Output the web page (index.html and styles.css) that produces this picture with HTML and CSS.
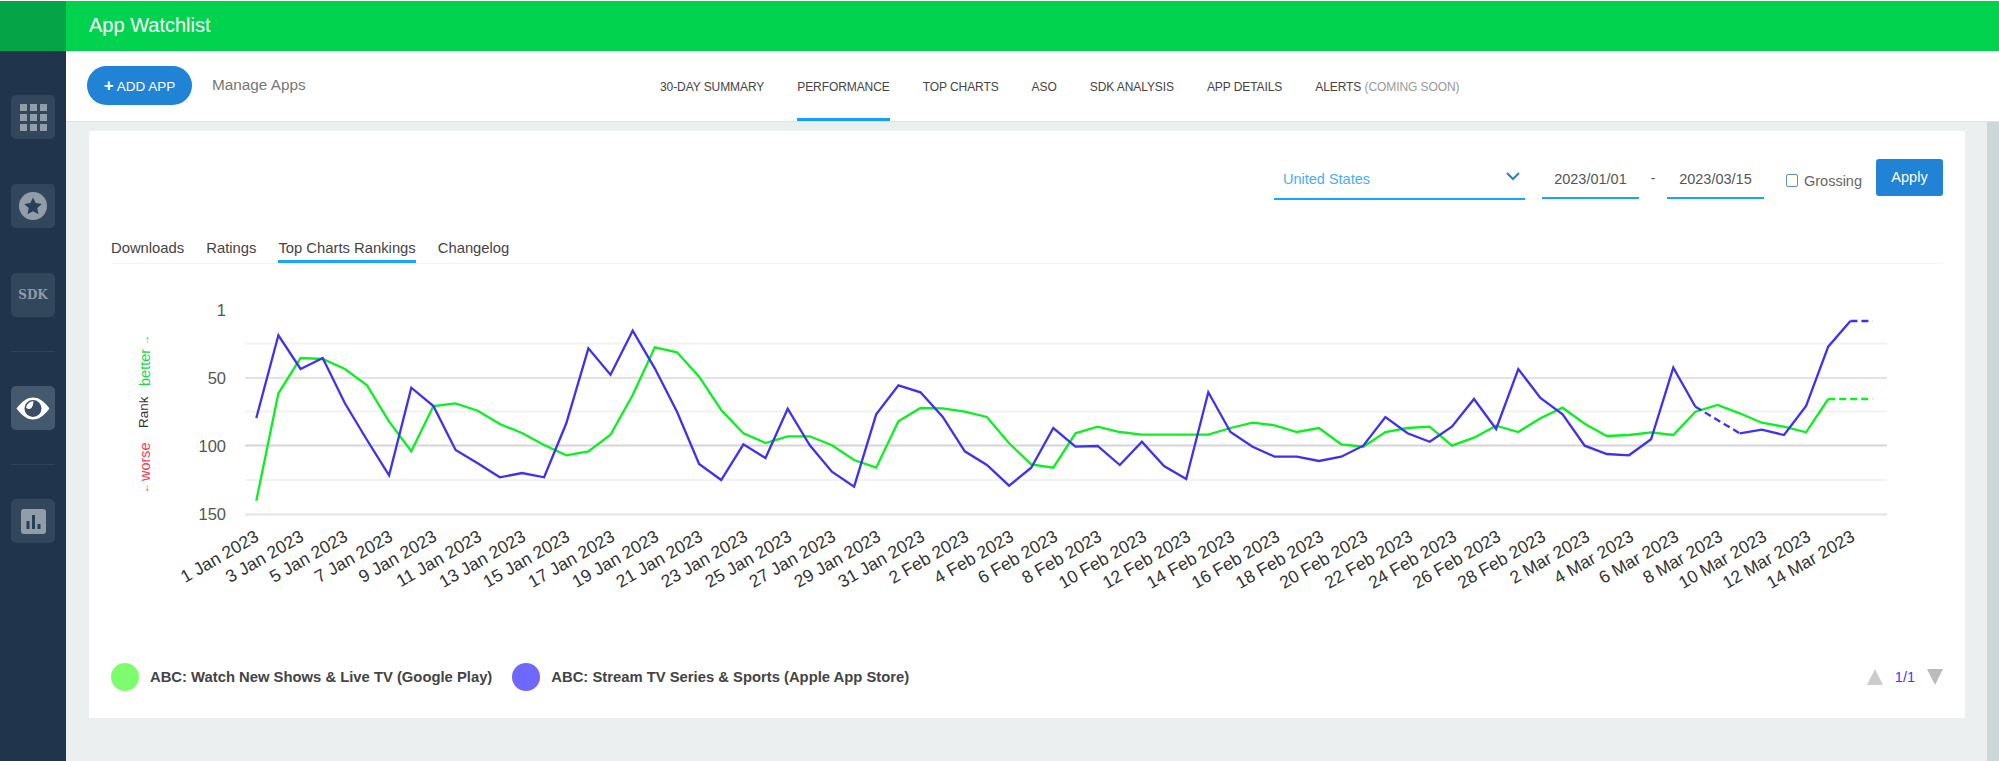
FILE: index.html
```html
<!DOCTYPE html>
<html lang="en">
<head>
<meta charset="utf-8">
<title>App Watchlist</title>
<link rel="stylesheet" href="styles.css">
</head>
<body>
<div class="shell">
  <aside class="sidebar">
    <div class="brand"></div>
    <nav class="side-nav">
      <a class="tile">
        <svg class="ico-grid" viewBox="0 0 27 27" width="27" height="27"><g class="ico-fill"><rect x="0" y="0" width="7" height="7"/><rect x="10" y="0" width="7" height="7"/><rect x="20" y="0" width="7" height="7"/><rect x="0" y="10" width="7" height="7"/><rect x="10" y="10" width="7" height="7"/><rect x="20" y="10" width="7" height="7"/><rect x="0" y="20" width="7" height="7"/><rect x="10" y="20" width="7" height="7"/><rect x="20" y="20" width="7" height="7"/></g></svg>
      </a>
      <a class="tile">
        <svg viewBox="0 0 28 28" width="28" height="28"><circle class="ico-fill" cx="14" cy="14" r="14"/><path class="ico-dark" d="M14 5.5l2.7 5.6 6.1.8-4.5 4.2 1.2 6.1-5.5-3-5.500 3 1.200-6.100-4.500-4.200 6.100-.8z"/></svg>
      </a>
      <a class="tile"><span class="sdk">SDK</span></a>
      <hr class="side-rule">
      <a class="tile tile-active">
        <svg viewBox="0 0 34 23" width="34" height="23"><path class="eye-band" d="M.5 11.500C6.500 3.500 12 .5 17 .5s10.500 3 16.500 11c-6 8-11.500 11-16.500 11S6.500 19.500.5 11.500z"/><circle class="eye-pupil" cx="17" cy="11.500" r="8.500"/><path class="eye-glint" d="M17.500 4.200c-3.600 0-6.800 2.600-7.400 6.200 1 1.600 3.400 2 5 .8 1.800-1.400 1.800-3.800 2.400-7z"/></svg>
      </a>
      <hr class="side-rule">
      <a class="tile">
        <svg viewBox="0 0 25 25" width="25" height="25"><rect class="ico-fill" width="25" height="25" rx="3"/><rect class="ico-dark" x="5.500" y="12" width="3" height="8"/><rect class="ico-dark" x="11" y="6" width="3" height="14"/><rect class="ico-dark" x="16.500" y="15" width="3" height="5"/></svg>
      </a>
    </nav>
  </aside>

  <main class="main">
    <header class="topbar">App Watchlist</header>

    <div class="subnav">
      <button class="add-btn"><span class="plus">+</span> ADD APP</button>
      <a class="manage">Manage Apps</a>
      <nav class="tabs">
        <a class="tab">30-DAY SUMMARY</a>
        <a class="tab tab-active">PERFORMANCE</a>
        <a class="tab">TOP CHARTS</a>
        <a class="tab">ASO</a>
        <a class="tab">SDK ANALYSIS</a>
        <a class="tab">APP DETAILS</a>
        <a class="tab">ALERTS <span class="soon">(COMING SOON)</span></a>
      </nav>
    </div>

    <div class="body-row">
      <section class="card">
        <div class="filters">
          <div class="select">
            <span>United States</span>
            <svg viewBox="0 0 14 9" width="14" height="9"><path class="chev" d="M1 1l6 6 6-6"/></svg>
          </div>
          <div class="date">2023/01/01</div>
          <div class="dash">-</div>
          <div class="date">2023/03/15</div>
          <label class="grossing"><span class="check"></span>Grossing</label>
          <button class="apply">Apply</button>
        </div>

        <div class="subtabs">
          <a class="subtab">Downloads</a>
          <a class="subtab">Ratings</a>
          <a class="subtab subtab-active">Top Charts Rankings</a>
          <a class="subtab">Changelog</a>
        </div>

        <svg class="chart" viewBox="111 264 1832 380" width="1832" height="380">
          <g class="grid">
            <line class="g-light" x1="245" x2="1887" y1="343.500" y2="343.500"/>
            <line class="g-mid" x1="245" x2="1887" y1="378" y2="378"/>
            <line class="g-light" x1="245" x2="1887" y1="411.500" y2="411.500"/>
            <line class="g-dark" x1="245" x2="1887" y1="445.500" y2="445.500"/>
            <line class="g-light" x1="245" x2="1887" y1="480" y2="480"/>
            <line class="g-mid" x1="245" x2="1887" y1="514.500" y2="514.500"/>
          </g>
          <g class="y-labels">
            <text x="226" y="316">1</text>
            <text x="226" y="384">50</text>
            <text x="226" y="452">100</text>
            <text x="226" y="520">150</text>
          </g>
          <text class="r-green" transform="translate(150 386) rotate(-90)">better</text>
          <text class="r-arrow r-green-fill" transform="translate(149 345) rotate(-90)">→</text>
          <text class="r-rank" transform="translate(148 428) rotate(-90)">Rank</text>
          <text class="r-red" transform="translate(150 481) rotate(-90)">worse</text>
          <text class="r-arrow r-red-fill" transform="translate(149 493) rotate(-90)">←</text>

          <polyline class="s-green" points="256.3,500.7 278.4,393.3 300.6,358 322.7,359 344.9,369 367,385.3 389.1,421.7 411.3,451.3 433.4,406 455.6,403.3 477.7,410.7 499.8,424 522,433 544.1,445 566.3,455.3 588.4,451.3 610.5,434.7 632.7,395 654.8,347.3 677,352.3 699.1,376.7 721.2,410 743.4,433.3 765.5,443 787.7,436.3 809.8,436.3 831.9,445.3 854.1,460 876.2,467.7 898.4,421.3 920.5,408 942.6,408.3 964.8,411.7 986.9,417 1009.1,443.3 1031.2,464.3 1053.3,467.7 1075.5,433.3 1097.6,426.7 1119.8,432 1141.9,434.7 1164,434.7 1186.2,434.7 1208.3,434.7 1230.5,428 1252.6,422.7 1274.7,425.3 1296.9,432 1319,428 1341.2,444.3 1363.3,446.7 1385.4,432 1407.6,428 1429.7,426.7 1451.9,445.7 1474,437.7 1496.1,425.7 1518.3,432 1540.4,418.3 1562.6,407.7 1584.7,423.7 1606.8,436 1629,435 1651.1,432.3 1673.3,435 1695.4,411.7 1717.5,405 1739.7,413.3 1761.8,422.7 1784,426.7 1806.1,432.3 1828.2,399"/>
          <polyline class="s-green s-dash" points="1828.2,399 1850.4,399 1872.5,399"/>
          <polyline class="s-blue" points="256.3,418 278.4,335.3 300.6,369 322.7,358 344.9,403.3 367,440 389.1,475.3 411.3,387.7 433.4,406 455.6,450 477.7,463.3 499.8,477.3 522,473 544.1,477.3 566.3,423.3 588.4,348.3 610.5,374.7 632.7,330.7 654.8,368.3 677,411.7 699.1,464 721.2,480 743.4,444.3 765.5,458 787.7,408.7 809.8,445.3 831.9,471.7 854.1,486.7 876.2,414.3 898.4,385.3 920.5,392.3 942.6,416.7 964.8,451.3 986.9,465 1009.1,485.7 1031.2,467.7 1053.3,428 1075.5,446.7 1097.6,446 1119.8,465 1141.9,441.7 1164,466 1186.2,479 1208.3,392.3 1230.5,432 1252.6,446.7 1274.7,456.7 1296.9,456.7 1319,461 1341.2,456.7 1363.3,445.7 1385.4,417 1407.6,433.3 1429.7,441.7 1451.9,426.7 1474,399 1496.1,429 1518.3,369 1540.4,398 1562.6,414.3 1584.7,445.7 1606.8,454 1629,455.3 1651.1,439.3 1673.3,367.7 1695.4,406.7"/>
          <polyline class="s-blue s-dash" points="1695.4,406.7 1717.5,420 1739.7,433.3"/>
          <polyline class="s-blue" points="1739.7,433.3 1761.8,429.7 1784,435 1806.1,406 1828.2,346.7 1850.4,321"/>
          <polyline class="s-blue s-dash" points="1850.4,321 1872.5,321"/>

          <g class="x-labels">
            <text transform="translate(260 540) rotate(-30)">1 Jan 2023</text>
            <text transform="translate(305 540) rotate(-30)">3 Jan 2023</text>
            <text transform="translate(349 540) rotate(-30)">5 Jan 2023</text>
            <text transform="translate(394 540) rotate(-30)">7 Jan 2023</text>
            <text transform="translate(438 540) rotate(-30)">9 Jan 2023</text>
            <text transform="translate(483 540) rotate(-30)">11 Jan 2023</text>
            <text transform="translate(527 540) rotate(-30)">13 Jan 2023</text>
            <text transform="translate(571 540) rotate(-30)">15 Jan 2023</text>
            <text transform="translate(616 540) rotate(-30)">17 Jan 2023</text>
            <text transform="translate(660 540) rotate(-30)">19 Jan 2023</text>
            <text transform="translate(704 540) rotate(-30)">21 Jan 2023</text>
            <text transform="translate(749 540) rotate(-30)">23 Jan 2023</text>
            <text transform="translate(793 540) rotate(-30)">25 Jan 2023</text>
            <text transform="translate(837 540) rotate(-30)">27 Jan 2023</text>
            <text transform="translate(882 540) rotate(-30)">29 Jan 2023</text>
            <text transform="translate(926 540) rotate(-30)">31 Jan 2023</text>
            <text transform="translate(970 540) rotate(-30)">2 Feb 2023</text>
            <text transform="translate(1015 540) rotate(-30)">4 Feb 2023</text>
            <text transform="translate(1059 540) rotate(-30)">6 Feb 2023</text>
            <text transform="translate(1103 540) rotate(-30)">8 Feb 2023</text>
            <text transform="translate(1148 540) rotate(-30)">10 Feb 2023</text>
            <text transform="translate(1192 540) rotate(-30)">12 Feb 2023</text>
            <text transform="translate(1236 540) rotate(-30)">14 Feb 2023</text>
            <text transform="translate(1281 540) rotate(-30)">16 Feb 2023</text>
            <text transform="translate(1325 540) rotate(-30)">18 Feb 2023</text>
            <text transform="translate(1369 540) rotate(-30)">20 Feb 2023</text>
            <text transform="translate(1414 540) rotate(-30)">22 Feb 2023</text>
            <text transform="translate(1458 540) rotate(-30)">24 Feb 2023</text>
            <text transform="translate(1502 540) rotate(-30)">26 Feb 2023</text>
            <text transform="translate(1547 540) rotate(-30)">28 Feb 2023</text>
            <text transform="translate(1591 540) rotate(-30)">2 Mar 2023</text>
            <text transform="translate(1635 540) rotate(-30)">4 Mar 2023</text>
            <text transform="translate(1680 540) rotate(-30)">6 Mar 2023</text>
            <text transform="translate(1724 540) rotate(-30)">8 Mar 2023</text>
            <text transform="translate(1768 540) rotate(-30)">10 Mar 2023</text>
            <text transform="translate(1812 540) rotate(-30)">12 Mar 2023</text>
            <text transform="translate(1856 540) rotate(-30)">14 Mar 2023</text>
          </g>
        </svg>

        <div class="legend">
          <span class="dot dot-green"></span>
          <span class="legend-text">ABC: Watch New Shows &amp; Live TV (Google Play)</span>
          <span class="dot dot-blue"></span>
          <span class="legend-text">ABC: Stream TV Series &amp; Sports (Apple App Store)</span>
          <div class="pager">
            <span class="tri tri-up"></span>
            <span class="page-num">1/1</span>
            <span class="tri tri-down"></span>
          </div>
        </div>
      </section>
      <div class="scrolltrack"></div>
    </div>
  </main>
</div>
</body>
</html>
```

FILE: styles.css
```css
* { box-sizing: border-box; }
html, body { margin: 0; height: 100%; }
body {
  padding-top: 1px;
  background: #fff;
  font-family: "Liberation Sans", Arial, sans-serif;
  overflow: hidden;
}
.shell { display: flex; height: 760px; }

/* sidebar */
.sidebar { width: 66px; flex: none; background: #20354c; display: flex; flex-direction: column; }
.brand { height: 50px; background: #05a547; }
.side-nav { display: flex; flex-direction: column; align-items: center; padding-top: 44px; gap: 45px; }
.tile {
  width: 44px; height: 44px; border-radius: 5px; background: #33475c;
  display: flex; align-items: center; justify-content: center;
}
.tile-active { background: #44586e; }
.side-rule { width: 44px; height: 1px; border: 0; margin: -11px 0; background: #2e4359; }
.ico-fill { fill: #929daa; }
.ico-dark { fill: #2a4059; }
.sdk { font: bold 12px "DejaVu Serif", serif; color: #8f9ba7; }
.eye-band { fill: #fff; }
.eye-pupil { fill: #3a4e63; }
.eye-glint { fill: #fff; }

/* top */
.main { flex: 1; min-width: 0; display: flex; flex-direction: column; background: #ebeff0; }
.topbar {
  height: 50px; flex: none; background: #02d34f; color: #fff;
  font-size: 20px; line-height: 48px; padding-left: 23px;
}
.subnav {
  height: 71px; flex: none; background: #fff; border-bottom: 1px solid #dfe3e5;
  display: flex; align-items: center;
}
.add-btn {
  margin: 0 0 1px 21px; width: 105px; height: 39px; border: 0; border-radius: 20px;
  background: #2183d6; color: #fff; font: 13.500px "Liberation Sans", Arial, sans-serif; padding: 0;
}
.plus { font-weight: bold; font-size: 17px; line-height: 1; }
.manage { margin: 0 0 2px 20px; font-size: 15.300px; color: #777; width: 94px; white-space: nowrap; }
.tabs { display: flex; gap: 33px; align-self: stretch; margin-left: 354px; }
.tab {
  display: flex; align-items: center; white-space: pre; padding-top: 5px;
  font-size: 12px; letter-spacing: -0.08px; color: #444; border-bottom: 3px solid transparent;
  height: 70px;
}
.tab-active { border-bottom-color: #14a0f4; }
.soon { color: #999; }

/* card */
.body-row { flex: 1; display: flex; min-height: 0; padding-left: 23px; }
.card {
  width: 1876px; height: 587px; margin: 9px 22px 0 0; background: #fff;
  padding: 28px 22px 27px;
}
.scrolltrack { width: 12px; flex: none; background: #cdd7da; }

.filters { display: flex; justify-content: flex-end; align-items: flex-start; height: 42px; }
.select {
  width: 251px; height: 41px; padding: 0 5px 0 9px; border-bottom: 2px solid #16a6fb;
  display: flex; align-items: center; justify-content: space-between;
  color: #46aef7; font-size: 14.500px;
}
.select svg { margin: -6px 0 0; transform: translateY(1px); }
.chev { fill: none; stroke: #2b7fc9; stroke-width: 2; }
.date {
  width: 97px; height: 40px; margin-left: 17px; padding-top: 1px; border-bottom: 2px solid #16a6fb;
  display: flex; align-items: center; justify-content: center;
  font-size: 14.500px; color: #555;
}
.dash { width: 28px; margin-right: -17px; height: 38px; display: flex; align-items: center; justify-content: center; color: #555; font-size: 14px; }
.grossing { display: flex; align-items: center; height: 43px; margin-left: 22px; margin-right: 14px; font-size: 14.500px; color: #666; }
.check { width: 12px; height: 13px; border: 1.500px solid #5f8fc5; border-radius: 2px; margin-right: 6px; }
.apply {
  width: 67px; height: 37px; border: 0; border-radius: 3px; background: #2183d6; color: #fff; padding: 0 0 2px;
  font: 14.500px "Liberation Sans", Arial, sans-serif;
}

.subtabs { display: flex; gap: 22px; margin-top: 36px; border-bottom: 1px solid #f1f3f4; }
.subtab { font-size: 14.800px; line-height: 22px; padding-bottom: 1px; color: #444; border-bottom: 3px solid transparent; }
.subtab-active { border-bottom-color: #1ca5f5; }

/* chart */
.chart { display: block; }
.grid line { stroke-width: 2; }
.g-light { stroke: #f2f2f2; }
.g-mid { stroke: #e3e3e3; }
.g-dark { stroke: #d6d6d6; }
.y-labels text { font-size: 16.500px; fill: #555; text-anchor: end; }
.x-labels text { font-size: 17.500px; fill: #333; text-anchor: end; }
.r-green { font-size: 14.500px; fill: #16d84e; }
.r-red { font-size: 14.500px; fill: #f5414f; }
.r-rank { font-size: 13.500px; fill: #333; }
.r-arrow { font-size: 10px; }
.r-green-fill { fill: #16d84e; }
.r-red-fill { fill: #f5414f; }
.s-green, .s-blue { fill: none; stroke-width: 2.300; stroke-linejoin: miter; }
.s-green { stroke: #0bf01f; }
.s-blue { stroke: #4030f0; }
.s-dash { stroke-dasharray: 7 4; }

/* legend */
.legend { display: flex; align-items: center; height: 28px; margin-top: 19px; }
.dot { width: 28px; height: 28px; border-radius: 50%; flex: none; margin-right: 11px; }
.dot-green { background: #7dfd6e; }
.dot-blue { background: #6f68ff; margin-left: 20px; }
.legend-text { font-size: 14.800px; font-weight: bold; color: #444; white-space: nowrap; }
.pager { margin-left: auto; display: flex; align-items: center; gap: 12px; }
.page-num { font-size: 14.500px; color: #3b3bee; }
.tri { width: 0; height: 0; border-left: 8px solid transparent; border-right: 8px solid transparent; }
.tri-up { border-bottom: 16px solid #ccc; }
.tri-down { border-top: 16px solid #bbb; }
```
